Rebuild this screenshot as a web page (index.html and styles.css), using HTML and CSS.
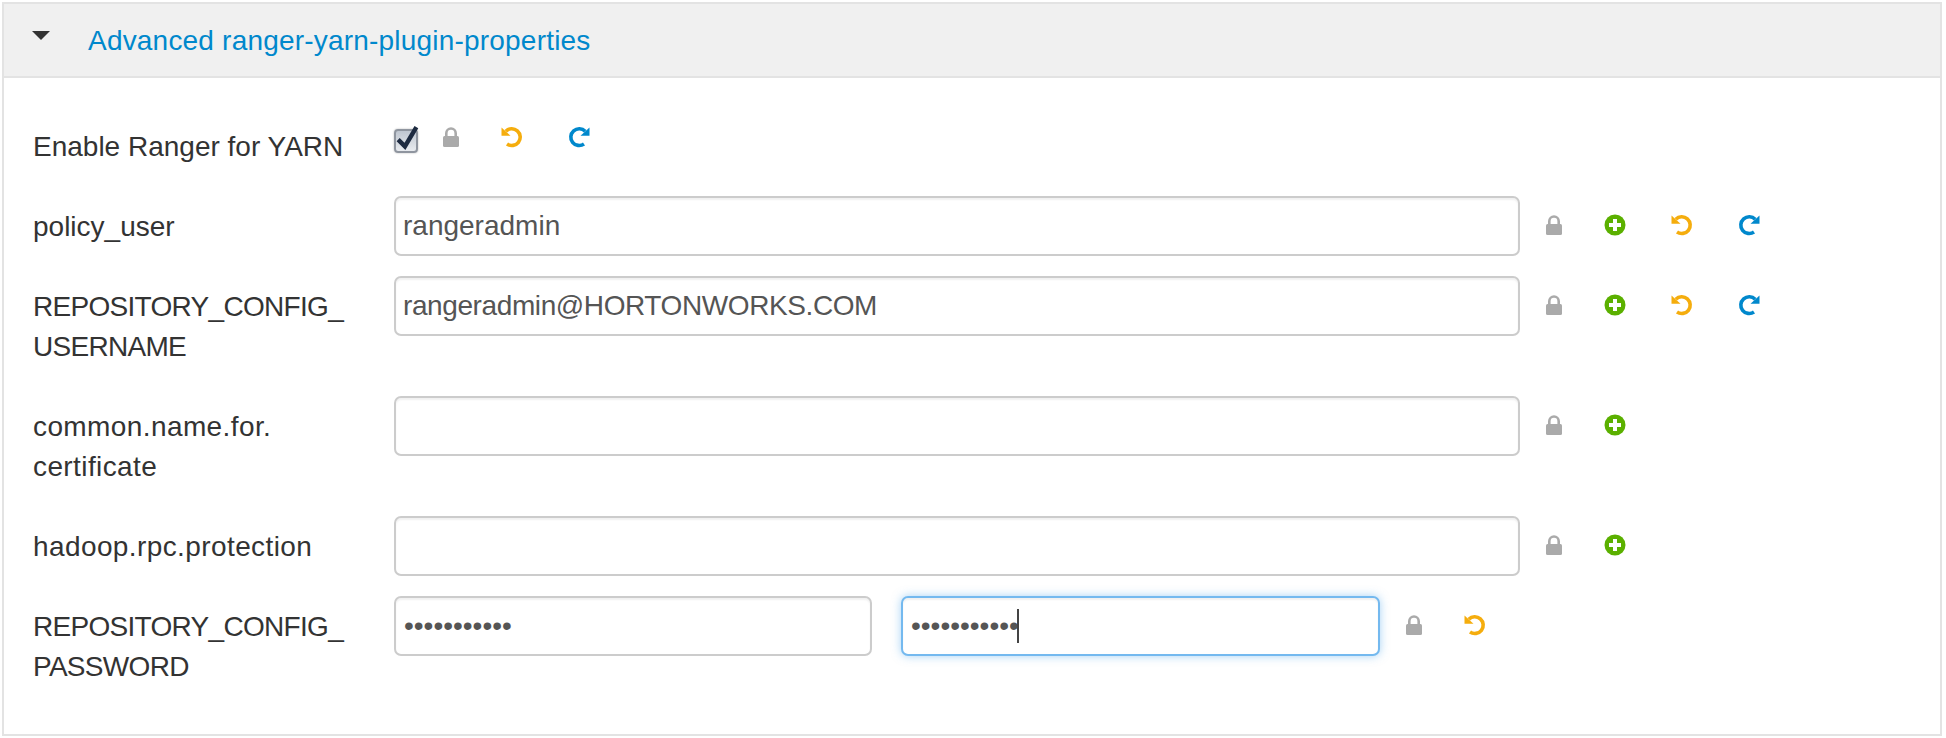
FILE: index.html
```html
<!DOCTYPE html>
<html lang="en">
<head>
    <meta charset="UTF-8">
    <meta name="viewport" content="width=device-width, initial-scale=1.0">
    <title>Advanced ranger-yarn-plugin-properties</title>
    <link rel="stylesheet" href="styles.css">
</head>
<body>
    <!-- shared icons -->
    <svg class="icon-defs" aria-hidden="true">
        <symbol id="i-lock" viewBox="0 0 16 20">
            <path d="M3.3 10V6.2a4.7 4.7 0 0 1 9.4 0V10" fill="none" stroke="#aaa" stroke-width="2.6"/>
            <rect x="0" y="9" width="16" height="11" rx="1.5" fill="#aaa"/>
        </symbol>
        <symbol id="i-plus" viewBox="0 0 22 22">
            <circle cx="11" cy="11" r="10.5" fill="#5bb000"/>
            <path d="M9 5h4v4h4v4h-4v4H9v-4H5V9h4z" fill="#fff"/>
        </symbol>
        <symbol id="i-undo" viewBox="0 0 22 22">
            <path d="M4.8 5.2A8.4 8.4 0 1 1 6 18" fill="none" stroke="currentColor" stroke-width="3.6"/>
            <path d="M0.5 1.5L9.5 9.8H0.5z" fill="currentColor"/>
        </symbol>
    </svg>

    <div class="panel">
        <div class="panel-head">
            <span class="caret"></span>
            <a class="panel-title" href="#">Advanced ranger-yarn-plugin-properties</a>
        </div>
        <div class="panel-body">
            <div class="row">
                <label class="prop-label">Enable Ranger for YARN</label>
                <div class="prop-value short">
                    <span class="check-wrap">
                        <input class="check" type="checkbox" checked>
                        <svg class="check-mark" viewBox="0 0 24 24"><path d="M4 14l6.5 6.5L21.5 2" fill="none" stroke="#1d2a40" stroke-width="4.2"/></svg>
                    </span>
                    <span class="actions">
                        <svg class="ico lock"><use href="#i-lock"/></svg>
                        <svg class="ico undo"><use href="#i-undo"/></svg>
                        <svg class="ico redo"><use href="#i-undo"/></svg>
                    </span>
                </div>
            </div>

            <div class="row">
                <label class="prop-label">policy_user</label>
                <div class="prop-value">
                    <input class="text-in" type="text" value="rangeradmin">
                    <span class="actions">
                        <svg class="ico lock"><use href="#i-lock"/></svg>
                        <svg class="ico plus"><use href="#i-plus"/></svg>
                        <svg class="ico undo"><use href="#i-undo"/></svg>
                        <svg class="ico redo"><use href="#i-undo"/></svg>
                    </span>
                </div>
            </div>

            <div class="row">
                <label class="prop-label caps">REPOSITORY_CONFIG_<br>USERNAME</label>
                <div class="prop-value">
                    <input class="text-in caps-in" type="text" value="rangeradmin@HORTONWORKS.COM">
                    <span class="actions">
                        <svg class="ico lock"><use href="#i-lock"/></svg>
                        <svg class="ico plus"><use href="#i-plus"/></svg>
                        <svg class="ico undo"><use href="#i-undo"/></svg>
                        <svg class="ico redo"><use href="#i-undo"/></svg>
                    </span>
                </div>
            </div>

            <div class="row">
                <label class="prop-label wide">common.name.for.<br>certificate</label>
                <div class="prop-value">
                    <input class="text-in" type="text">
                    <span class="actions">
                        <svg class="ico lock"><use href="#i-lock"/></svg>
                        <svg class="ico plus"><use href="#i-plus"/></svg>
                    </span>
                </div>
            </div>

            <div class="row">
                <label class="prop-label wide">hadoop.rpc.protection</label>
                <div class="prop-value">
                    <input class="text-in" type="text">
                    <span class="actions">
                        <svg class="ico lock"><use href="#i-lock"/></svg>
                        <svg class="ico plus"><use href="#i-plus"/></svg>
                    </span>
                </div>
            </div>

            <div class="row">
                <label class="prop-label caps">REPOSITORY_CONFIG_<br>PASSWORD</label>
                <div class="prop-value">
                    <input class="text-in pass" type="password" value="rangeradmin">
                    <span class="pass-confirm">
                        <input class="text-in pass focused" type="password" value="rangeradmin">
                        <span class="text-caret"></span>
                    </span>
                    <span class="actions">
                        <svg class="ico lock"><use href="#i-lock"/></svg>
                        <svg class="ico undo"><use href="#i-undo"/></svg>
                    </span>
                </div>
            </div>
        </div>
    </div>
</body>
</html>
```

FILE: styles.css
```css
html, body {
    margin: 0;
    background-color: #fff;
}
body {
    font-family: "Liberation Sans", Arial, sans-serif;
    font-size: 28px;
    color: #333;
    padding: 2px 4px 2px 2px;
    height: 738px;
    box-sizing: border-box;
    overflow: hidden;
}
.icon-defs {
    display: none;
}
.panel {
    border: 2px solid #e3e3e3;
}
.panel-head {
    display: flex;
    align-items: center;
    height: 72px;
    background-color: #f0f0f0;
    border-bottom: 2px solid #e3e3e3;
}
.caret {
    width: 0;
    height: 0;
    margin: 0 38px 9px 28px;
    border-left: 9px solid transparent;
    border-right: 9px solid transparent;
    border-top: 9px solid #333;
}
.panel-title {
    color: #0088cc;
    text-decoration: none;
    line-height: 40px;
    letter-spacing: 0.2px;
    padding-top: 2px;
}
.panel-body {
    padding: 38px 0 18px 29px;
}
.row {
    display: flex;
    align-items: flex-start;
    margin-bottom: 20px;
}
.prop-label {
    width: 361px;
    flex: none;
    padding: 11px 0 9px;
    line-height: 40px;
}
.prop-label.caps {
    letter-spacing: -0.7px;
}
.prop-label.wide {
    letter-spacing: 0.4px;
}
.prop-value {
    display: flex;
    align-items: center;
    height: 60px;
}
.prop-value.short {
    height: 42px;
}
.text-in {
    width: 1126px;
    height: 60px;
    box-sizing: border-box;
    padding: 0 7px;
    border: 2px solid #ccc;
    border-radius: 7px;
    font-family: inherit;
    font-size: 28px;
    color: #555;
    background-color: #fff;
    box-shadow: inset 0 2px 2px rgba(0, 0, 0, 0.06);
    outline: none;
}
.text-in.caps-in {
    letter-spacing: -0.4px;
}
.text-in.pass {
    width: 478px;
    padding: 0 8px;
}
.pass-confirm {
    position: relative;
    display: block;
    margin-left: 29px;
}
.pass-confirm .text-in.pass {
    width: 479px;
}
.text-in.focused {
    border-color: #74b9ef;
    box-shadow: inset 0 2px 2px rgba(0, 0, 0, 0.06), 0 0 10px rgba(82, 168, 236, 0.5);
}
.text-caret {
    position: absolute;
    left: 116px;
    top: 13px;
    width: 2px;
    height: 34px;
    background-color: #444;
}
.check-wrap {
    position: relative;
    display: block;
    width: 24px;
    height: 24px;
    margin-top: 7px;
}
.check {
    appearance: none;
    display: block;
    width: 24px;
    height: 24px;
    margin: 0;
    border: 2px solid #8f959f;
    border-radius: 4px;
    background: linear-gradient(#bfc6d0, #e8ebef);
    box-shadow: 0 0 2px rgba(0, 0, 0, 0.3);
}
.check-mark {
    position: absolute;
    left: 0;
    top: -4px;
    width: 25px;
    height: 25px;
}
.actions {
    display: flex;
    align-items: center;
    margin-left: 26px;
    margin-bottom: 2px;
}
.short .actions {
    margin-left: 25px;
    margin-bottom: 0;
}
.ico {
    display: block;
    flex: none;
    width: 22px;
    height: 22px;
}
.lock {
    width: 16px;
    height: 20px;
    margin-right: 42px;
}
.plus {
    margin-right: 45px;
}
.undo {
    margin-right: 45px;
    color: #f5ad0d;
}
.redo {
    color: #0088cc;
    transform: scaleX(-1);
}
```
